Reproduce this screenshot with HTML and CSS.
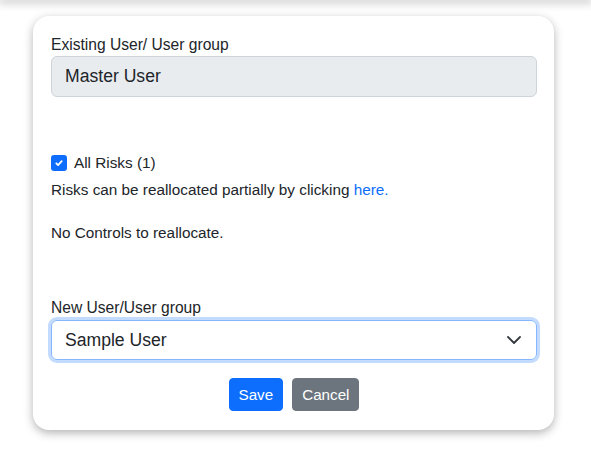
FILE: index.html
```html
<!DOCTYPE html>
<html lang="en">
<head>
<meta charset="utf-8">
<title>Reallocate</title>
<link rel="stylesheet" href="styles.css">
</head>
<body>
<div class="topbar"></div>
<div class="card">
  <label class="label">Existing User/ User group</label>
  <div class="field field-disabled">Master User</div>

  <div class="check-row">
    <span class="checkbox">
      <svg width="12" height="12" viewBox="0 0 20 20"><path d="M5.5 10.5l3 3 6-6.5" fill="none" stroke="#fff" stroke-width="3" stroke-linecap="round" stroke-linejoin="round"/></svg>
    </span>
    <span>All Risks (1)</span>
  </div>
  <p class="text">Risks can be reallocated partially by clicking <a class="link" href="#">here.</a></p>
  <p class="text text-controls">No Controls to reallocate.</p>

  <label class="label label-new">New User/User group</label>
  <div class="field field-select">
    <span>Sample User</span>
    <svg class="chevron" width="14" height="8" viewBox="0 0 14 8"><path d="M1 1l6 6 6-6" fill="none" stroke="#343a40" stroke-width="1.8" stroke-linecap="round" stroke-linejoin="round"/></svg>
  </div>

  <div class="actions">
    <button class="btn btn-primary">Save</button>
    <button class="btn btn-secondary">Cancel</button>
  </div>
</div>
</body>
</html>
```

FILE: styles.css
```css
* { box-sizing: border-box; }
html, body { margin: 0; padding: 0; background: #fff; }
body {
  font-family: "Liberation Sans", Arial, sans-serif;
  color: #212529;
  font-size: 15.3px;
  width: 591px;
  height: 459px;
  overflow: hidden;
}
.topbar {
  height: 0;
  box-shadow: 0 0 10px 2px rgba(0,0,0,0.35);
}
.card {
  margin: 16px 0 0 33px;
  width: 521px;
  background: #fff;
  border-radius: 16px;
  box-shadow: 0 3px 10px rgba(0,0,0,0.3);
  padding: 18px 17px 19px 18px;
  display: flex;
  flex-direction: column;
}
.label {
  display: block;
  font-size: 15.6px;
  line-height: 21px;
  margin-bottom: 1px;
}
.field {
  height: 41px;
  border: 1px solid #ced4da;
  border-radius: 6px;
  font-size: 17.6px;
  padding: 0 13px;
  display: flex;
  align-items: center;
}
.field-disabled {
  background: #e9ecef;
}
.check-row {
  display: flex;
  align-items: center;
  gap: 7px;
  line-height: 21px;
  margin-top: 55px;
}
.checkbox {
  width: 16px;
  height: 16px;
  border-radius: 3px;
  background: #0d6efd;
  display: flex;
  align-items: center;
  justify-content: center;
}
.text {
  margin: 6px 0 0;
  line-height: 21px;
}
.text-controls { margin-top: 22px; }
.link { color: #0d6efd; text-decoration: none; }
.label-new { margin-top: 54px; margin-bottom: 2px; }
.field-select {
  justify-content: space-between;
  border-color: #86b7fe;
  box-shadow: 0 0 0 3px rgba(13,110,253,0.25);
  height: 40px;
}
.chevron { margin-right: 2px; }
.actions {
  display: flex;
  justify-content: center;
  gap: 9px;
  margin-top: 18px;
}
.btn {
  font-family: "Liberation Sans", Arial, sans-serif;
  font-size: 15.2px;
  line-height: 23px;
  padding: 4px 9px;
  border: 1px solid transparent;
  border-radius: 4px;
  color: #fff;
}
.btn-primary { background: #0d6efd; border-color: #0d6efd; }
.btn-secondary { background: #6c757d; border-color: #6c757d; }
```
